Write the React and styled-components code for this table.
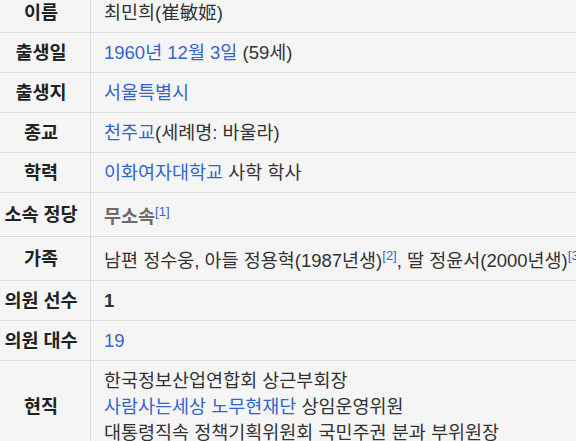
import styled, { createGlobalStyle } from "styled-components";

const GlobalStyle = createGlobalStyle`
  html, body {
    margin: 0;
    padding: 0;
    background: #f5f5f5;
    overflow: hidden;
  }
  body {
    font-family: "Liberation Sans", "Noto Sans CJK KR", sans-serif;
    color: #333;
  }
`;

const Frame = styled.div`
  margin: -8px 0 0 -8px;
`;

const Table = styled.table`
  border-collapse: collapse;
  width: 700px;
  background: #f5f5f5;
  font-size: 18.5px;
  line-height: 26px;
`;

const Row = styled.tr`
  border-top: 1px solid #dcdcdc;
  border-bottom: 1px solid #dcdcdc;
`;

const Label = styled.th`
  width: 82px;
  padding: 6.5px 8px;
  text-align: center;
  vertical-align: middle;
  font-weight: bold;
  color: #222;
  white-space: nowrap;
  border-right: 1px solid #dcdcdc;
`;

const Value = styled.td`
  padding: 6.5px 13px;
  text-align: left;
  vertical-align: middle;
  white-space: nowrap;
  font-weight: ${(p) => (p.$bold ? "bold" : "normal")};
  color: ${(p) => (p.$muted ? "#6b6b6b" : "#333")};
`;

const Link = styled.a`
  color: #3366cc;
  text-decoration: none;
`;

const Ref = styled.sup`
  font-size: 13px;
  line-height: 23px;
  font-weight: normal;
  color: #3366cc;
`;

const Lines = styled.div`
  display: flex;
  flex-direction: column;
`;

export default function App() {
  return (
    <>
      <GlobalStyle />
      <Frame>
        <Table>
          <tbody>
            <Row>
              <Label>이름</Label>
              <Value>최민희(崔敏姬)</Value>
            </Row>
            <Row>
              <Label>출생일</Label>
              <Value>
                <Link>1960년</Link> <Link>12월 3일</Link> (59세)
              </Value>
            </Row>
            <Row>
              <Label>출생지</Label>
              <Value>
                <Link>서울특별시</Link>
              </Value>
            </Row>
            <Row>
              <Label>종교</Label>
              <Value>
                <Link>천주교</Link>(세례명: 바울라)
              </Value>
            </Row>
            <Row>
              <Label>학력</Label>
              <Value>
                <Link>이화여자대학교</Link> 사학 학사
              </Value>
            </Row>
            <Row>
              <Label>소속 정당</Label>
              <Value $bold $muted>
                무소속<Ref>[1]</Ref>
              </Value>
            </Row>
            <Row>
              <Label>가족</Label>
              <Value>
                남편 정수웅, 아들 정용혁(1987년생)<Ref>[2]</Ref>, 딸
                정윤서(2000년생)<Ref>[3]</Ref>
              </Value>
            </Row>
            <Row>
              <Label>의원 선수</Label>
              <Value $bold>1</Value>
            </Row>
            <Row>
              <Label>의원 대수</Label>
              <Value>
                <Link>19</Link>
              </Value>
            </Row>
            <Row>
              <Label>현직</Label>
              <Value>
                <Lines>
                  <span>한국정보산업연합회 상근부회장</span>
                  <span>
                    <Link>사람사는세상 노무현재단</Link> 상임운영위원
                  </span>
                  <span>대통령직속 정책기획위원회 국민주권 분과 부위원장</span>
                </Lines>
              </Value>
            </Row>
          </tbody>
        </Table>
      </Frame>
    </>
  );
}
